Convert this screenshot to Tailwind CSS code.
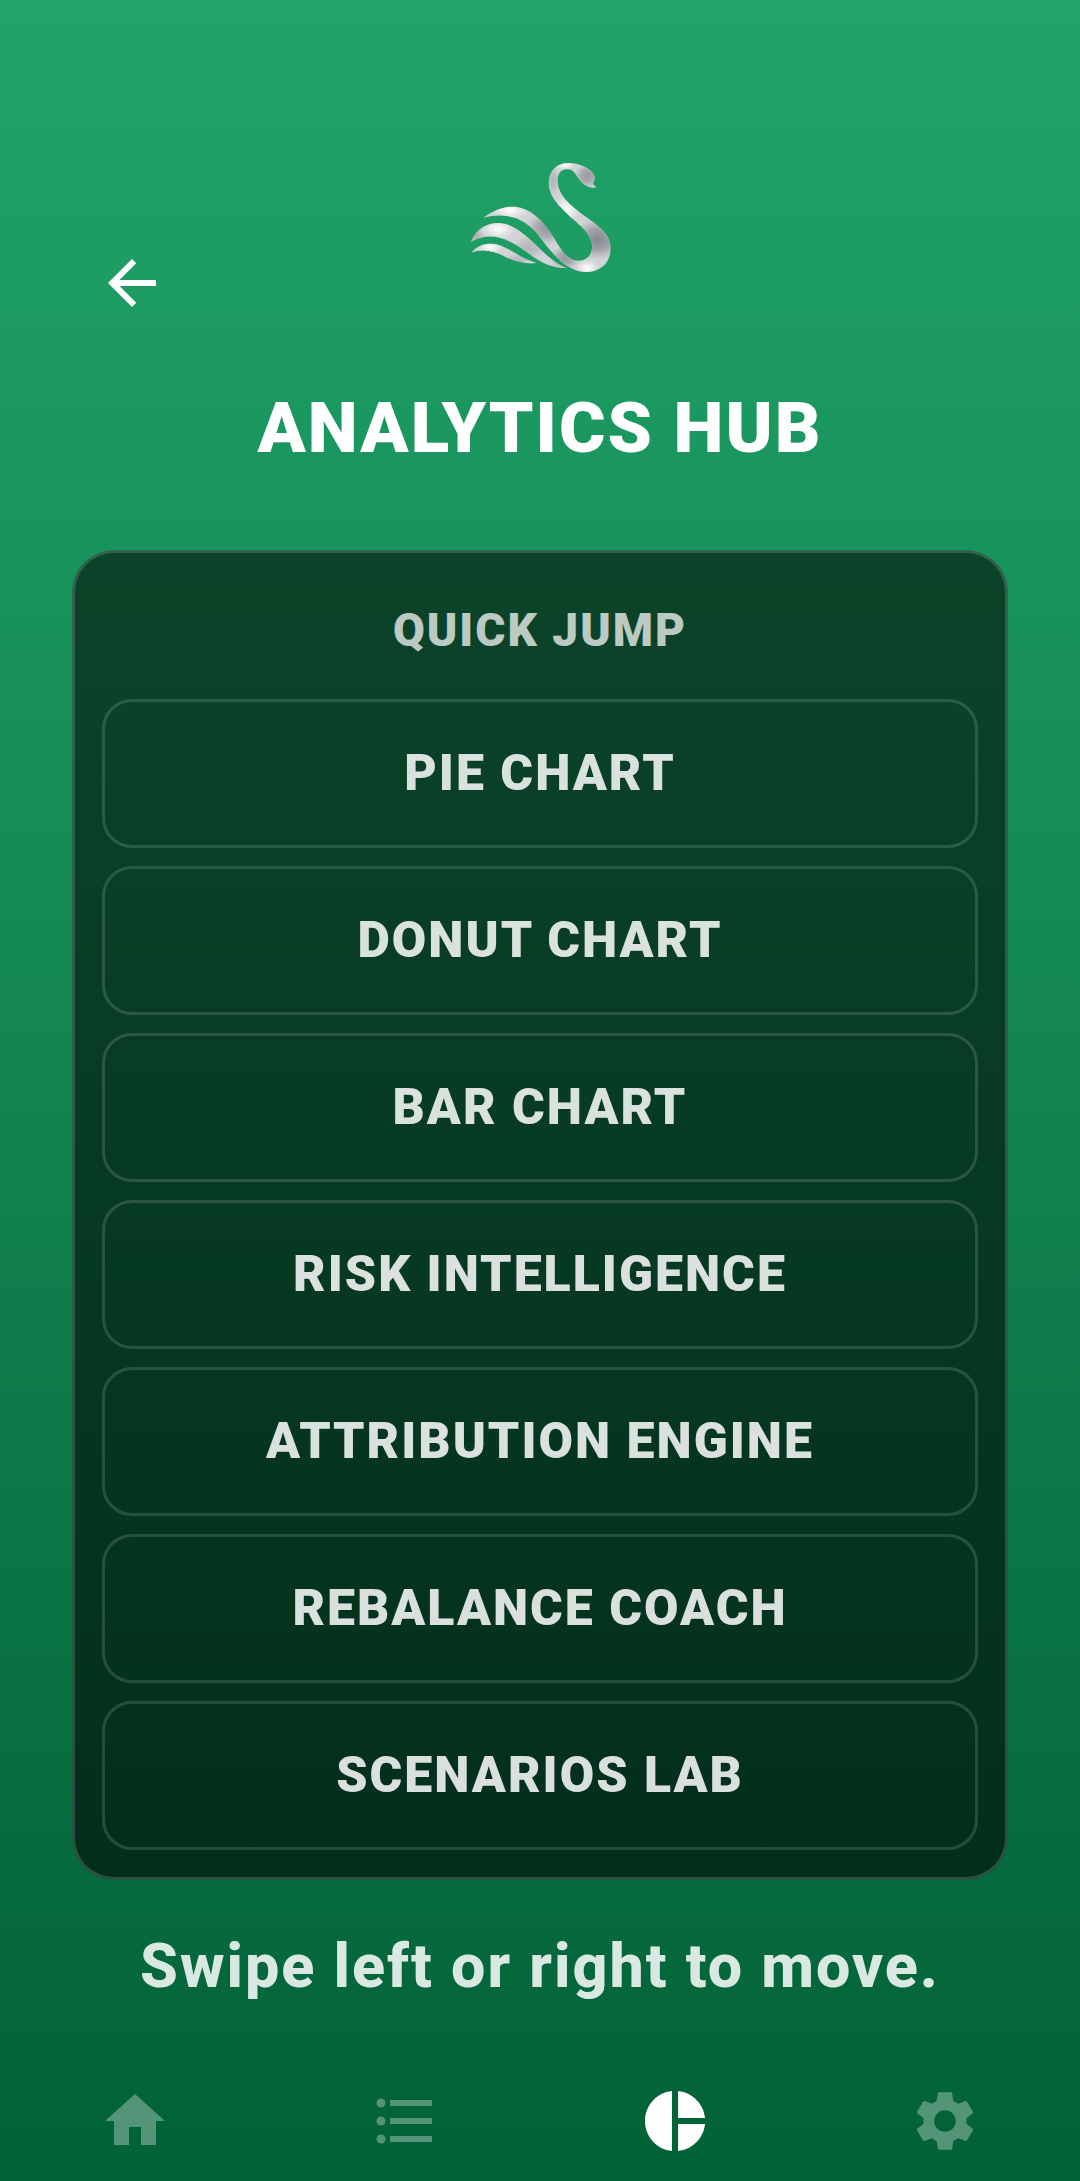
<!DOCTYPE html>
<html lang="en">
  <head>
    <meta charset="UTF-8" />
    <meta name="viewport" content="width=device-width, initial-scale=1.0" />
    <title>Analytics Hub</title>
    <script src="https://cdn.jsdelivr.net/npm/@tailwindcss/browser@4"></script>
  </head>
  <body class="font-[Roboto,sans-serif]">
    <div class="flex min-h-screen flex-col bg-linear-to-b from-[#20a469] via-[#128450] to-[#026137] text-white">
      <header class="px-18 pt-40 text-center">
        <div class="grid grid-cols-3">
          <a href="#back" aria-label="Back" class="mt-[87px] ml-6 size-18">
            <svg class="size-full" viewBox="0 0 24 24" fill="currentColor">
              <path d="M20 11H7.83l5.59-5.59L12 4l-8 8 8 8 1.41-1.41L7.83 13H20v-2z" />
            </svg>
          </a>
          <!-- Swan logo -->
          <svg class="h-[120px] w-[150px] justify-self-center" viewBox="45 60 450 360" aria-hidden="true">
            <defs>
              <clipPath id="swan">
                <path
                  d="M100 233C140 206 165 200 195 200C240 203 275 240 300 275C325 312 345 362 385 362C418 362 430 335 425 310C418 270 375 248 335 205C310 180 296 155 296 130C296 92 320 69 355 69C400 69 434 95 434 112C435 120 432 124 429 128C430 134 434 138 439 142C425 147 402 140 385 115C375 98 368 88 350 88C330 88 322 105 323 125C325 165 360 195 400 225C450 260 482 285 482 325C482 370 450 396 410 396C350 396 310 345 265 285C225 235 170 215 100 233Z"
                />
                <path
                  d="M63 305C80 265 110 249 145 249C200 250 240 300 290 345C310 363 330 376 350 384C320 386 280 375 235 340C180 300 130 270 63 305Z"
                />
                <path
                  d="M64 338C80 318 100 311 125 311C170 312 200 352 260 369C235 373 200 368 165 350C130 332 100 325 64 338Z"
                />
              </clipPath>
              <radialGradient id="shade">
                <stop offset="0" stop-color="#85878f" />
                <stop offset="0.5" stop-color="#8f9199" stop-opacity="0.75" />
                <stop offset="1" stop-color="#a0a2a8" stop-opacity="0" />
              </radialGradient>
              <radialGradient id="shine">
                <stop offset="0" stop-color="#fff" />
                <stop offset="1" stop-color="#fff" stop-opacity="0" />
              </radialGradient>
            </defs>
            <g clip-path="url(#swan)">
              <path d="M45 60h450v360H45z" fill="#d2d3d7" />
              <ellipse cx="412" cy="108" rx="40" ry="38" fill="url(#shade)" opacity="0.8" />
              <ellipse cx="308" cy="122" rx="24" ry="45" fill="url(#shade)" opacity="0.4" />
              <ellipse cx="442" cy="298" rx="75" ry="62" fill="url(#shade)" />
              <ellipse cx="290" cy="265" rx="62" ry="50" fill="url(#shade)" opacity="0.8" />
              <ellipse cx="345" cy="355" rx="45" ry="38" fill="url(#shade)" opacity="0.8" />
              <ellipse cx="235" cy="325" rx="50" ry="40" fill="url(#shade)" opacity="0.4" />
              <ellipse cx="75" cy="290" rx="30" ry="30" fill="url(#shade)" opacity="0.5" />
              <ellipse cx="200" cy="362" rx="40" ry="20" fill="url(#shade)" opacity="0.4" />
              <ellipse cx="350" cy="208" rx="40" ry="44" fill="url(#shine)" />
              <ellipse cx="180" cy="210" rx="55" ry="30" fill="url(#shine)" />
              <ellipse cx="145" cy="268" rx="50" ry="30" fill="url(#shine)" />
              <ellipse cx="120" cy="322" rx="40" ry="22" fill="url(#shine)" />
              <ellipse cx="412" cy="384" rx="34" ry="24" fill="url(#shine)" />
              <ellipse cx="345" cy="76" rx="30" ry="12" fill="url(#shine)" />
            </g>
          </svg>
        </div>
        <h1 class="mt-[67px] text-[71px] leading-[84px] font-black tracking-[2px]">ANALYTICS HUB</h1>
      </header>

      <main class="mt-20 px-18 text-center">
        <nav
          aria-labelledby="quick-jump"
          class="rounded-[42px] border-3 border-white/16 bg-linear-to-b from-black/54 to-black/56 bg-origin-border p-[27px]"
        >
          <h2 id="quick-jump" class="pt-[22px] pb-[41px] text-[46px] leading-[56px] font-black tracking-[2px] text-white/72">QUICK JUMP</h2>
          <div class="flex flex-col gap-[18px] text-[50px] leading-[63px] font-black tracking-[2px] text-white/85">
            <button class="rounded-[30px] border-3 border-white/14 py-10">PIE CHART</button>
            <button class="rounded-[30px] border-3 border-white/14 py-10">DONUT CHART</button>
            <button class="rounded-[30px] border-3 border-white/14 py-10">BAR CHART</button>
            <button class="rounded-[30px] border-3 border-white/14 py-10">RISK INTELLIGENCE</button>
            <button class="rounded-[30px] border-3 border-white/14 py-10">ATTRIBUTION ENGINE</button>
            <button class="rounded-[30px] border-3 border-white/14 py-10">REBALANCE COACH</button>
            <button class="rounded-[30px] border-3 border-white/14 py-10">SCENARIOS LAB</button>
          </div>
        </nav>
        <p class="mt-[50px] text-[61px] leading-[72px] font-extrabold tracking-[2px] text-white/85">Swipe left or right to move.</p>
      </main>

      <!-- Tab bar -->
      <nav aria-label="Main" class="mt-auto grid grid-cols-4 justify-items-center pb-6 text-white/32">
        <a href="#home" aria-label="Home">
          <svg class="size-18" viewBox="0 0 24 24" fill="currentColor">
            <path d="M10 20v-6h4v6h5v-8h3L12 3 2 12h3v8z" />
          </svg>
        </a>
        <a href="#list" aria-label="List">
          <svg class="size-18" viewBox="0 0 24 24" fill="currentColor">
            <circle cx="4" cy="6" r="1.5" />
            <circle cx="4" cy="12" r="1.5" />
            <circle cx="4" cy="18" r="1.5" />
            <path d="M7 5h14v2H7zM7 11h14v2H7zM7 17h14v2H7z" />
          </svg>
        </a>
        <a href="#analytics" aria-label="Analytics" aria-current="page" class="text-white">
          <svg class="size-18" viewBox="0 0 24 24" fill="currentColor">
            <path
              d="M11 2v20c-5.07-.5-9-4.79-9-10s3.93-9.5 9-10zm2.03 0v8.99H22c-.47-4.74-4.24-8.52-8.97-8.99zm0 11.01V22c4.74-.47 8.5-4.25 8.97-8.99h-8.97z"
            />
          </svg>
        </a>
        <a href="#settings" aria-label="Settings">
          <svg class="size-18" viewBox="0 0 24 24" fill="currentColor">
            <path
              d="M19.14 12.94c.04-.3.06-.61.06-.94 0-.32-.02-.64-.07-.94l2.03-1.58c.18-.14.23-.41.12-.61l-1.92-3.32c-.12-.22-.37-.29-.59-.22l-2.39.96c-.5-.38-1.03-.7-1.62-.94l-.36-2.54c-.04-.24-.24-.41-.48-.41h-3.84c-.24 0-.43.17-.47.41l-.36 2.54c-.59.24-1.13.57-1.62.94l-2.39-.96c-.22-.08-.47 0-.59.22L2.74 8.87c-.12.21-.08.47.12.61l2.03 1.58c-.05.3-.09.63-.09.94s.02.64.07.94l-2.03 1.58c-.18.14-.23.41-.12.61l1.92 3.32c.12.22.37.29.59.22l2.39-.96c.5.38 1.03.7 1.62.94l.36 2.54c.05.24.24.41.48.41h3.84c.24 0 .44-.17.47-.41l.36-2.54c.59-.24 1.13-.56 1.62-.94l2.39.96c.22.08.47 0 .59-.22l1.92-3.32c.12-.22.07-.47-.12-.61l-2.01-1.58zM12 15.6c-1.98 0-3.6-1.62-3.6-3.6s1.62-3.6 3.6-3.6 3.6 1.62 3.6 3.6-1.62 3.6-3.6 3.6z"
            />
          </svg>
        </a>
      </nav>
    </div>
  </body>
</html>
